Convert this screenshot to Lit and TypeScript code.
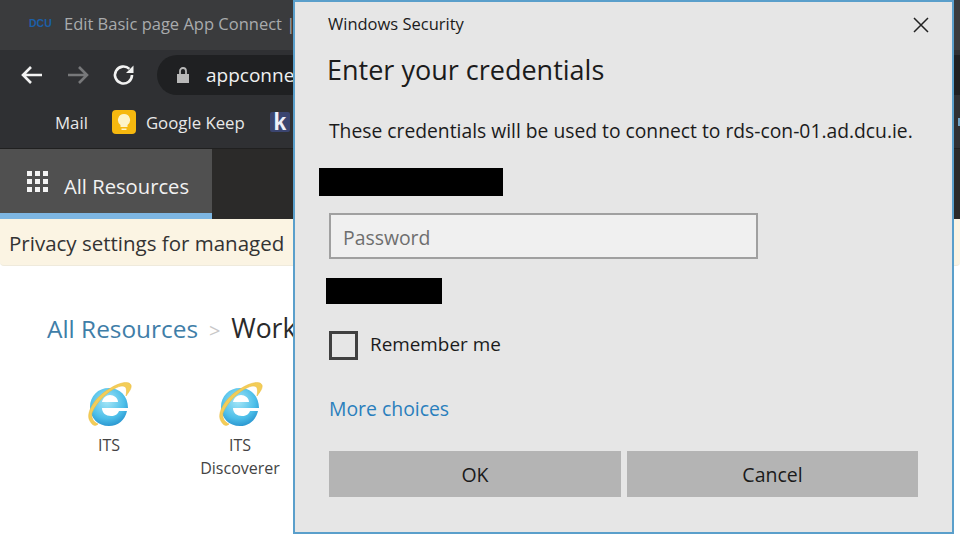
import { LitElement, html, css } from "lit";
import { customElement } from "lit/decorators.js";

const ieIcon = (id: string) => html`<svg class="ie" width="48" height="48" viewBox="0 0 48 48">
  <defs>
    <radialGradient id=${id} cx="0.45" cy="0.35" r="0.75">
      <stop offset="0" stop-color="#a5e6f7"/>
      <stop offset="0.6" stop-color="#4dbfe9"/>
      <stop offset="1" stop-color="#1d86c6"/>
    </radialGradient>
  </defs>
  <path d="M24 8 C35 8 43 16 43 28 L17 28 C17 33 21 36 26 36 C30 36 33 34 34 31 L42 31 C40 40 33 46 24 46 C13 46 5 38 5 27 C5 16 13 8 24 8 Z M17 22 L33 22 C33 18 29 15 25 15 C21 15 18 18 17 22 Z" fill=${`url(#${id})`} fill-rule="evenodd"/>
  <path d="M5 41 C0 33 10 17 24 9 C33 3 44 0 46 5 C47 8 44 12 41 16 C42 10 42 6 37 6 C28 7 13 19 7 33 C6 37 8 42 13 44 C10 47 7 45 5 41 Z" fill="#f3cd58" stroke="#e8b93a" stroke-width="0.5"/>
</svg>`;

@customElement("app-root")
export class AppRoot extends LitElement {
  static styles = css`
    :host {
      display: block;
      width: 960px;
      height: 538px;
      position: relative;
      overflow: hidden;
      background: #fff;
      font-family: "Open Sans", "Noto Sans", sans-serif;
    }
    .browser {
      width: 960px;
      display: flex;
      flex-direction: column;
    }
    .tabbar {
      height: 50px;
      background: #3a3b3d;
      display: flex;
      align-items: center;
      padding: 0 0 4px 29px;
      gap: 12px;
      box-sizing: border-box;
    }
    .favicon {
      font-family: "Liberation Sans", sans-serif;
      font-size: 10.5px;
      font-weight: 700;
      color: #1c5fa8;
      width: 23px;
    }
    .tabtitle {
      font-size: 16.5px;
      color: #a9abad;
      white-space: nowrap;
    }
    .toolbar {
      height: 50px;
      background: #2f3033;
      display: flex;
      align-items: center;
      padding-left: 20px;
      box-sizing: border-box;
    }
    .nav {
      width: 24px;
      height: 24px;
      margin-right: 22px;
      flex: none;
    }
    .omni {
      margin-left: -1px;
      height: 40px;
      flex: 1;
      border-radius: 20px 0 0 20px;
      background: #1f2022;
      display: flex;
      align-items: center;
      padding-left: 19px;
      gap: 16px;
      color: #f0f0f0;
      font-size: 19px;
    }
    .bookmarks {
      height: 49px;
      background: #2f3033;
      border-bottom: 1px solid #202020;
      display: flex;
      align-items: center;
      padding: 0 0 4px 55px;
      box-sizing: border-box;
      color: #e8e8e8;
      font-size: 16.8px;
    }
    .keep {
      width: 24px;
      height: 24px;
      border-radius: 4px;
      background: #f6b80f;
      margin: 0 10px 0 24px;
      display: flex;
      align-items: center;
      justify-content: center;
    }
    .kicon {
      width: 20px;
      height: 20px;
      margin-left: 25px;
      background: #3b4570;
      color: #eef0fa;
      border-radius: 2px;
      font: 700 23px/20px "Liberation Sans", sans-serif;
      text-align: center;
    }
    .edge {
      margin-left: auto;
      width: 2px;
      height: 8px;
      background: #6fa4c8;
    }
    .nav2 {
      height: 70px;
      background: #2b2a29;
      display: flex;
    }
    .tab {
      width: 212px;
      box-sizing: border-box;
      background: #505050;
      border-bottom: 6px solid #7db6e2;
      display: flex;
      align-items: center;
      padding: 10px 0 0 27px;
      gap: 16px;
      color: #f2f2f2;
      font-size: 20.2px;
    }
    .grid {
      display: grid;
      grid-template-columns: repeat(3, 5px);
      gap: 3px;
      margin-top: -10px;
    }
    .grid i {
      width: 5px;
      height: 5px;
      background: #f4f4f4;
    }
    .notice {
      height: 47px;
      background: #fbf4e3;
      border-bottom: 1px solid #efeadc;
      border-radius: 0 0 4px 4px;
      display: flex;
      align-items: center;
      padding: 2px 0 0 9px;
      font-size: 20.5px;
      color: #333;
      box-sizing: border-box;
    }
    .crumbs {
      padding: 45px 0 0 47px;
      font-size: 24.4px;
      line-height: 34px;
      color: #3f7ea8;
      white-space: nowrap;
    }
    .crumbs .sep {
      color: #c8c8c8;
      margin: 0 4.5px;
      font-size: 20px;
    }
    .crumbs .cur {
      color: #2a2a2a;
      font-size: 26.5px;
    }
    .apps {
      display: flex;
      padding: 32px 0 0 64px;
      gap: 41px;
    }
    .app {
      width: 90px;
      display: flex;
      flex-direction: column;
      align-items: center;
      font-size: 16px;
      line-height: 23px;
      color: #444;
      text-align: center;
    }
    .app span {
      margin-top: 6px;
    }
    .dialog {
      position: absolute;
      left: 293px;
      top: 0;
      width: 661px;
      height: 534px;
      box-sizing: border-box;
      background: #e6e6e6;
      border: 2px solid #5a9fcb;
      padding: 12px 34px 0 33px;
      display: flex;
      flex-direction: column;
      color: #1b1b1b;
    }
    .titlebar {
      display: flex;
      justify-content: space-between;
      align-items: center;
      font-size: 16.5px;
      line-height: 20px;
    }
    .close {
      margin: 2px -11px 0 0;
      width: 16px;
      height: 16px;
    }
    h1 {
      margin: 17px 0 0 -1px;
      font-size: 27px;
      line-height: 38px;
      font-weight: 400;
    }
    .msg {
      margin: 29px 0 0 1px;
      font-size: 19.3px;
      line-height: 26px;
      white-space: nowrap;
    }
    .redact {
      background: #000;
    }
    .r1 {
      margin: 24px 0 0 -9px;
      width: 184px;
      height: 28px;
    }
    .field {
      margin: 17px 0 0 1px;
      width: 429px;
      height: 46px;
      box-sizing: border-box;
      border: 2px solid #a0a0a0;
      background: #f0f0f0;
      display: flex;
      align-items: center;
      padding: 2px 0 0 12px;
      color: #6e6e6e;
      font-size: 19.4px;
    }
    .r2 {
      margin: 19px 0 0 -2px;
      width: 116px;
      height: 26px;
    }
    .remember {
      margin: 27px 0 0 1px;
      display: flex;
      align-items: center;
      gap: 12px;
      font-size: 18.9px;
      line-height: 28px;
    }
    .remember .label {
      margin-top: -4px;
    }
    .check {
      width: 29px;
      height: 29px;
      box-sizing: border-box;
      border: 3px solid #404040;
    }
    .more {
      margin: 36px 0 0 1px;
      color: #2a7fbd;
      font-size: 19.4px;
      line-height: 26px;
    }
    .buttons {
      margin: 29px 0 0 1px;
      display: flex;
      gap: 6px;
    }
    .btn {
      width: 292px;
      height: 46px;
      background: #b4b4b4;
      display: flex;
      align-items: center;
      justify-content: center;
      font-size: 19.5px;
    }
    .btn + .btn {
      width: 291px;
    }
  `;

  render() {
    return html`
      <div class="browser">
        <div class="tabbar">
          <span class="favicon">DCU</span>
          <span class="tabtitle">Edit Basic page App Connect |</span>
        </div>
        <div class="toolbar">
          <svg class="nav" viewBox="0 0 24 24" fill="none" stroke="#f2f2f2" stroke-width="2.6">
            <path d="M22 12H3M11 4l-8 8 8 8" />
          </svg>
          <svg class="nav" viewBox="0 0 24 24" fill="none" stroke="#77787a" stroke-width="2.6">
            <path d="M2 12h19M13 4l8 8-8 8" />
          </svg>
          <svg class="nav" viewBox="0 0 24 24" fill="none" stroke="#f2f2f2" stroke-width="2.6">
            <path d="M20 12a8.5 8.5 0 1 1-2.6-6.1" />
            <path d="M21.5 2.5v7.5h-7.5z" fill="#f2f2f2" stroke="none" />
          </svg>
          <div class="omni">
            <svg width="14" height="18" viewBox="0 0 14 18">
              <path d="M1 8h12v9H1z" fill="#b8b8b8" />
              <path d="M4 8V5a3 3 0 0 1 6 0v3" fill="none" stroke="#b8b8b8" stroke-width="1.8" />
            </svg>
            <span>appconnect</span>
          </div>
        </div>
        <div class="bookmarks">
          <span>Mail</span>
          <span class="keep">
            <svg width="14" height="18" viewBox="0 0 14 18">
              <path d="M7 1a6 6 0 0 0-3.5 10.9V14h7v-2.100A6 6 0 0 0 7 1z" fill="#fdf3c8" />
              <path d="M4.500 15.500h5V17h-5z" fill="#fdf3c8" />
            </svg>
          </span>
          <span>Google Keep</span>
          <span class="kicon">k</span>
          <span class="edge"></span>
        </div>
        <div class="nav2">
          <div class="tab">
            <span class="grid">${Array.from({ length: 9 }, () => html`<i></i>`)}</span>
            <span>All Resources</span>
          </div>
        </div>
        <div class="notice">Privacy settings for managed</div>
        <div class="crumbs">All Resources <span class="sep">&gt;</span> <span class="cur">Work</span></div>
        <div class="apps">
          <div class="app">${ieIcon("ie1")}<span>ITS</span></div>
          <div class="app">${ieIcon("ie2")}<span>ITS<br />Discoverer</span></div>
        </div>
      </div>
      <div class="dialog">
        <div class="titlebar">
          <span>Windows Security</span>
          <svg class="close" viewBox="0 0 16 16" stroke="#222" stroke-width="1.500" fill="none">
            <path d="M1 1l14 14M15 1L1 15" />
          </svg>
        </div>
        <h1>Enter your credentials</h1>
        <div class="msg">These credentials will be used to connect to rds-con-01.ad.dcu.ie.</div>
        <div class="redact r1"></div>
        <div class="field">Password</div>
        <div class="redact r2"></div>
        <div class="remember"><span class="check"></span><span class="label">Remember me</span></div>
        <div class="more">More choices</div>
        <div class="buttons">
          <div class="btn">OK</div>
          <div class="btn">Cancel</div>
        </div>
      </div>
    `;
  }
}
